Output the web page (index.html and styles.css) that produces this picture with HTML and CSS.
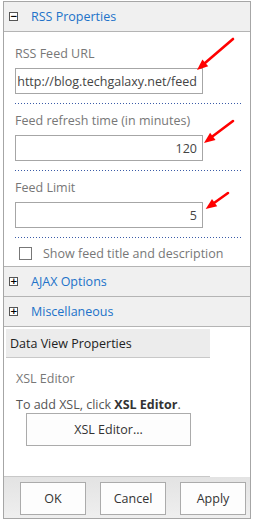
FILE: index.html
```html
<!DOCTYPE html>
<html lang="en">
<head>
    <meta charset="UTF-8">
    <meta name="viewport" content="width=device-width, initial-scale=1.0">
    <title>RSS Viewer Properties</title>
    <link rel="stylesheet" href="styles.css">
</head>
<body>
    <div class="panel">
        <div class="section-head">
            <span class="toggle">&minus;</span>
            <span class="section-title">RSS Properties</span>
        </div>
        <div class="section-body">
            <div class="field first">
                <div class="field-label">RSS Feed URL</div>
                <div class="text-box"><span>http://blog.techgalaxy.net/feed</span></div>
            </div>
            <div class="field">
                <div class="field-label">Feed refresh time (in minutes)</div>
                <div class="text-box"><span>120</span></div>
            </div>
            <div class="field">
                <div class="field-label">Feed Limit</div>
                <div class="text-box"><span>5</span></div>
            </div>
            <div class="check-row">
                <span class="check"></span>
                <span class="check-label">Show feed title and description</span>
            </div>
        </div>
        <div class="section-head">
            <span class="toggle">+</span>
            <span class="section-title">AJAX Options</span>
        </div>
        <div class="section-head">
            <span class="toggle">+</span>
            <span class="section-title">Miscellaneous</span>
        </div>

        <div class="dv-head">Data View Properties</div>
        <div class="dv-body">
            <div class="field-label">XSL Editor</div>
            <div class="hint">To add XSL, click <b>XSL Editor</b>.</div>
            <button class="btn xsl-btn">XSL Editor...</button>
        </div>
        <div class="separator"></div>

        <div class="footer">
            <button class="btn">OK</button>
            <button class="btn">Cancel</button>
            <button class="btn">Apply</button>
        </div>
    </div>

    <!-- red annotation arrows drawn over the screenshot -->
    <svg class="arrows" width="253" height="522" viewBox="0 0 253 522">
        <g stroke="#ff0000" stroke-width="2.6" stroke-linecap="round">
            <line x1="233" y1="39" x2="205" y2="63"/>
            <line x1="233" y1="121" x2="213" y2="136"/>
            <line x1="228" y1="193" x2="214" y2="203"/>
        </g>
        <g fill="#ff0000">
            <polygon points="197,70 208.2,66.2 202.4,59.4"/>
            <polygon points="204,143 215.5,140 210.1,132.8"/>
            <polygon points="205.7,209 217.2,206.3 212,198.9"/>
        </g>
    </svg>
</body>
</html>
```

FILE: styles.css
```css
body {
    margin: 0;
    font-family: "Open Sans", "Noto Sans", sans-serif;
    font-size: 12.5px;
    background: #fff;
    position: relative;
}
.panel {
    margin: 1px 0 0 3px;
    width: 248px;
    box-sizing: border-box;
    border: 1px solid #a6a6a6;
}
.section-head {
    height: 29px;
    display: flex;
    align-items: center;
    padding-left: 5px;
    background: #f0f0f0;
    border-bottom: 1px solid #b4b4b4;
}
.toggle {
    width: 9px;
    height: 9px;
    box-sizing: border-box;
    border: 1px solid #555;
    background: #fff;
    font-size: 9px;
    line-height: 6px;
    text-align: center;
    color: #000;
    font-family: "DejaVu Sans", sans-serif;
    font-weight: bold;
}
.section-title {
    margin-left: 13px;
    color: #2172c9;
}
.section-body {
    padding: 0 7px 4px 11px;
    border-bottom: 1px solid #b4b4b4;
}
.field {
    padding: 8px 0 10px;
    background: linear-gradient(to right, #3a5ba8 1px, transparent 1px) left bottom / 3px 1px repeat-x;
}
.field.first {
    padding-top: 13px;
}
.field-label {
    line-height: 18px;
    color: #777;
}
.field .field-label {
    margin-bottom: 5px;
}
.text-box {
    width: 188px;
    height: 26px;
    box-sizing: border-box;
    border: 1px solid #a6a6a6;
    padding: 0 5px;
    display: flex;
    align-items: center;
    justify-content: flex-end;
    overflow: hidden;
    white-space: nowrap;
    color: #444;
}
.text-box span {
    flex-shrink: 0;
}
.check-row {
    display: flex;
    align-items: center;
    height: 18px;
    margin-top: 6px;
    padding-left: 4px;
}
.check {
    width: 13px;
    height: 13px;
    box-sizing: border-box;
    border: 1px solid #777;
    background: #fff;
}
.check-label {
    margin-left: 11px;
    color: #777;
}
.dv-head {
    margin: 2px 0 0 2px;
    width: 204px;
    height: 29px;
    padding-left: 4px;
    box-sizing: border-box;
    line-height: 29px;
    background: #ececec;
    color: #222;
    border-bottom: 1px solid #c8c8c8;
}
.dv-body {
    padding: 12px 0 0 12px;
    height: 118px;
    box-sizing: border-box;
}
.hint {
    margin-top: 8px;
    line-height: 17px;
    color: #555;
}
.hint b {
    color: #333;
}
.btn {
    font-family: "Open Sans", "Noto Sans", sans-serif;
    font-size: 12.5px;
    color: #333;
    background: #fdfdfd;
    border: 1px solid #ababab;
    width: 66px;
    height: 33px;
    padding: 0;
}
.xsl-btn {
    display: block;
    width: 165px;
    margin-left: 10px;
}
.separator {
    width: 206px;
    height: 1px;
    background: #c8c8c8;
}
.footer {
    height: 41px;
    box-sizing: border-box;
    padding: 5px 0 0 16px;
    display: flex;
    align-items: flex-start;
    gap: 14px;
    background: linear-gradient(#e3e3e3, #efefef);
}
.arrows {
    position: absolute;
    top: 0;
    left: 0;
    pointer-events: none;
}
```
